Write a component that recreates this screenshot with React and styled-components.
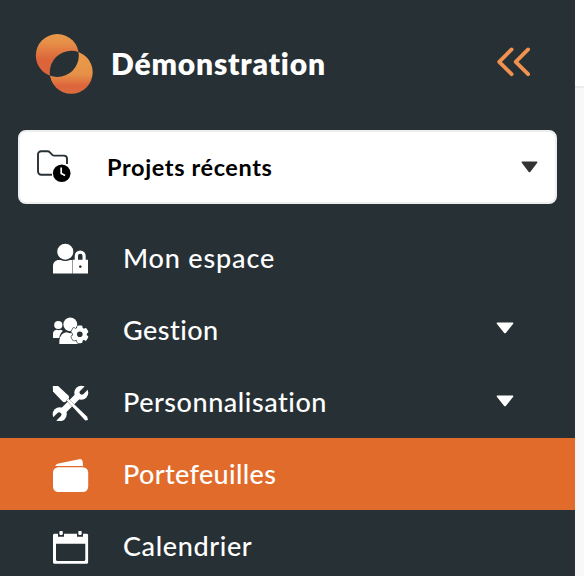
import React from "react";
import styled, { createGlobalStyle } from "styled-components";

function Logo() {
  return (
    <svg width="60" height="62" viewBox="0 0 60 62">
      <defs>
        <linearGradient id="back" x1="0" y1="0" x2="0" y2="1">
          <stop offset="0" stopColor="#e99a49" />
          <stop offset="0.2" stopColor="#e68f48" />
          <stop offset="0.6" stopColor="#dc643b" />
          <stop offset="1" stopColor="#dc643b" />
        </linearGradient>
        <linearGradient id="front" x1="0" y1="0" x2="0" y2="1">
          <stop offset="0.3" stopColor="#e89849" />
          <stop offset="0.55" stopColor="#e69048" />
          <stop offset="0.82" stopColor="#dc643b" />
          <stop offset="1" stopColor="#de6d3d" />
        </linearGradient>
        <clipPath id="lens">
          <circle cx="22.3" cy="22.5" r="21.5" />
        </clipPath>
      </defs>
      <circle cx="22.3" cy="22.5" r="21.5" fill="url(#back)" />
      <circle cx="36.2" cy="39.3" r="21.5" fill="url(#front)" />
      <circle
        cx="36.2"
        cy="39.3"
        r="21.5"
        fill="#273035"
        clipPath="url(#lens)"
      />
    </svg>
  );
}

function CollapseIcon() {
  return (
    <svg
      width="36"
      height="32"
      viewBox="0 0 36 32"
      fill="none"
      stroke="#f29250"
      strokeWidth="3.8"
      strokeLinecap="round"
      strokeLinejoin="round"
    >
      <path d="M15.6 3.4 3.2 15.8l12.4 12.4M32.1 3.4 19.7 15.800l12.400 12.400" />
    </svg>
  );
}

function RecentIcon() {
  return (
    <svg width="36" height="34" viewBox="0 0 36 34">
      <path
        d="M16 24.7H5.2A3.2 3.2 0 0 1 2 21.5V4.4A3.2 3.2 0 0 1 5.2 1.2h6.3c1 0 1.8.4 2.4 1.1l2.4 2.5c.5.5 1.2.8 2 .8h9.500c1.800 0 3.200 1.400 3.200 3.200V14"
        fill="none"
        stroke="#273035"
        strokeWidth="1.9"
      />
      <circle cx="25.7" cy="23.3" r="8.8" fill="#000" />
      <path
        d="M25.2 17.6v6l3.9 2"
        fill="none"
        stroke="#fff"
        strokeWidth="1.7"
      />
    </svg>
  );
}

function Caret({ color = "#fff", width = 18 }) {
  return (
    <svg width={width} height="12" viewBox="0 0 18 12" preserveAspectRatio="none">
      <path
        d="M1.4.5h15.2c.7 0 1 .7.6 1.2l-7.2 9c-.5.7-1.5.7-2 0L.8 1.7C.4 1.2.7.5 1.4.5z"
        fill={color}
      />
    </svg>
  );
}

function UserLockIcon() {
  return (
    <Icon>
      <circle cx="13.3" cy="11.7" r="8" />
      <path d="M1 33.5V26c0-3.4 2.4-6 6-6h1.6c3 1.4 6.4 1.4 9.4 0h2.2v13.5z" />
      <path
        fillRule="evenodd"
        d="M20.6 33.5V19.8h2.1V16a5.5 5.5 0 0 1 11 0v3.8H36v13.7zM26 19.8h4.5V16a2.25 2.25 0 0 0-4.5 0zM28.3 25.3a1.3 1.3 0 1 0 .01 0z"
      />
    </Icon>
  );
}

function TeamIcon() {
  return (
    <Icon>
      <circle cx="6.3" cy="13" r="4.1" />
      <path d="M1 25.9V21.8c0-2.3 1.4-3.8 3.5-4 1.4.5 2.8.5 4.1 0 1 .1 1.7.5 2.3 1.2-2 1.7-3.2 3.9-3.6 6.9z" />
      <circle cx="18.3" cy="12.4" r="6.9" />
      <path d="M7.4 31.900c-.4-6.400 2.100-11 6.800-11.600 2.700 1.100 5.500 1.100 8.300 0l6.300.3v11.300z" />
      <Gear />
    </Icon>
  );
}

function Gear() {
  const teeth = [0, 60, 120];
  return (
    <g transform="translate(27.8 22.3)">
      <circle r="7.6" fill="#273035" />
      {teeth.map((angle) => (
        <rect
          key={angle}
          x="-2.7"
          y="-8.8"
          width="5.4"
          height="17.6"
          rx="1.3"
          transform={`rotate(${angle})`}
          stroke="#273035"
          strokeWidth="1.2"
          paintOrder="stroke"
        />
      ))}
      <circle r="7" />
      <circle r="2.8" fill="#273035" />
    </g>
  );
}

function ToolsIcon() {
  return (
    <Icon>
      <circle cx="29.3" cy="8.7" r="7" />
      <circle cx="7.7" cy="30.2" r="7" />
      <path d="M9 29 28 10" stroke="#fff" strokeWidth="6.6" />
      <g stroke="#273035" strokeWidth="4.6" strokeLinecap="round">
        <path d="M29.9 8.4 37 1.3" />
        <path d="M7.1 30.6 0 37.7" />
      </g>
      <g stroke="#273035" strokeWidth="0.6" paintOrder="stroke">
        <path d="M.8 2h5.300l10.500 9.800c.8 1.500.4 2.800-.3 3.700l-2.600 2.300c-1.200.7-2.400.5-3.400-.5L1 7.500z" />
        <path d="m14.700 16.500 1.700-1.700 18.800 18 .8 3.200-2.700.5z" />
      </g>
    </Icon>
  );
}

function WalletIcon() {
  return (
    <Icon>
      <rect x="1" y="11.3" width="35.2" height="24.7" rx="5.3" />
      <path d="M3.2 9.9c.8-1.6 2-2.1 3.3-2.4l20.7-4.3c1.8-.4 3.2.6 3.4 2.3l.5 4.4z" />
    </Icon>
  );
}

function CalendarIcon() {
  return (
    <Icon>
      <path
        fillRule="evenodd"
        d="M2.5 5.8H6v3h6v-3h13v3h6v-3h3.6c.9 0 1.5.6 1.5 1.5v26.9c0 .9-.6 1.5-1.5 1.5H2.5c-.9 0-1.5-.6-1.5-1.5V7.3c0-.9.6-1.5 1.5-1.5zM4 15.7v15.7c0 .9.6 1.5 1.5 1.5h26.3c.9 0 1.5-.6 1.5-1.5V15.7z"
      />
      <rect x="7.4" y="3" width="3.4" height="3.9" rx="0.8" />
      <rect x="26.3" y="3" width="3.4" height="3.9" rx="0.8" />
    </Icon>
  );
}

const items = [
  { label: "Mon espace", icon: UserLockIcon, spacing: 0.83 },
  { label: "Gestion", icon: TeamIcon, spacing: 0.46, caretShift: 5 },
  { label: "Personnalisation", icon: ToolsIcon, spacing: 0.53, caretShift: 3 },
  { label: "Portefeuilles", icon: WalletIcon, spacing: 0.35, active: true },
  { label: "Calendrier", icon: CalendarIcon, spacing: 0.62 },
];

function App() {
  return (
    <Page>
      <GlobalStyle />
      <Sidebar>
        <Header>
          <Logo />
          <Title>Démonstration</Title>
          <CollapseButton aria-label="Réduire">
            <CollapseIcon />
          </CollapseButton>
        </Header>
        <ProjectSelect>
          <RecentIcon />
          <SelectLabel>Projets récents</SelectLabel>
          <Caret color="#333" width={17} />
        </ProjectSelect>
        <Menu>
          {items.map(({ label, icon: ItemIcon, spacing, active, caretShift }) => (
            <MenuItem key={label} $active={active}>
              <ItemIcon />
              <MenuLabel $spacing={spacing}>{label}</MenuLabel>
              {caretShift && (
                <CaretBox $shift={caretShift}>
                  <Caret />
                </CaretBox>
              )}
            </MenuItem>
          ))}
        </Menu>
      </Sidebar>
      <Content>
        <ContentHeader />
      </Content>
    </Page>
  );
}

export default App;

const GlobalStyle = createGlobalStyle`
  * {
    box-sizing: border-box;
  }

  body {
    margin: 0;
    font-family: Lato, "Liberation Sans", sans-serif;
  }
`;

const Page = styled.div`
  display: flex;
  width: 584px;
  height: 576px;
  overflow: hidden;
`;

const Sidebar = styled.aside`
  display: flex;
  flex-direction: column;
  flex: none;
  width: 575px;
  background: #273035;
`;

const Content = styled.main`
  flex: 1;
  background: #f8f8f8;
`;

const ContentHeader = styled.div`
  height: 88px;
  background: #ffffff;
  border-bottom: 2px solid #ececec;
`;

const Header = styled.header`
  display: flex;
  align-items: center;
  flex: none;
  height: 130px;
  padding: 0 43px 2px 35px;

  svg {
    flex: none;
  }
`;

const Title = styled.h1`
  flex: 1;
  margin: 0 0 2px 16px;
  color: #ffffff;
  font-size: 30px;
  font-weight: 800;
  line-height: 40px;
  letter-spacing: 0.8px;
  white-space: nowrap;
`;

const CollapseButton = styled.button`
  display: flex;
  padding: 0 0 5px;
  border: 0;
  background: none;
`;

const ProjectSelect = styled.div`
  display: flex;
  align-items: center;
  flex: none;
  height: 74px;
  margin: 0 18px;
  padding: 0 17px 0 16px;
  background: #ffffff;
  border: 2px solid #eeeeee;
  border-radius: 8px;
`;

const SelectLabel = styled.span`
  flex: 1;
  margin-left: 35px;
  padding-bottom: 1px;
  color: #000000;
  font-size: 23.5px;
  font-weight: 700;
  line-height: 32px;
  letter-spacing: 0.62px;
`;

const Menu = styled.nav`
  flex: none;
  margin-top: 18px;
`;

const MenuItem = styled.a`
  display: flex;
  align-items: center;
  height: 72px;
  padding: 0 61px 0 52px;
  background: ${(props) => (props.$active ? "#e16b2b" : "transparent")};
`;

const Icon = styled.svg.attrs({ viewBox: "0 0 37 37" })`
  flex: none;
  width: 37px;
  height: 37px;
  fill: #ffffff;
`;

const MenuLabel = styled.span`
  flex: 1;
  margin-left: 34px;
  color: #ffffff;
  font-size: 27px;
  font-weight: 500;
  line-height: 36px;
  letter-spacing: ${(props) => props.$spacing}px;
`;

const CaretBox = styled.span`
  display: flex;
  padding-bottom: ${(props) => props.$shift}px;
`;
